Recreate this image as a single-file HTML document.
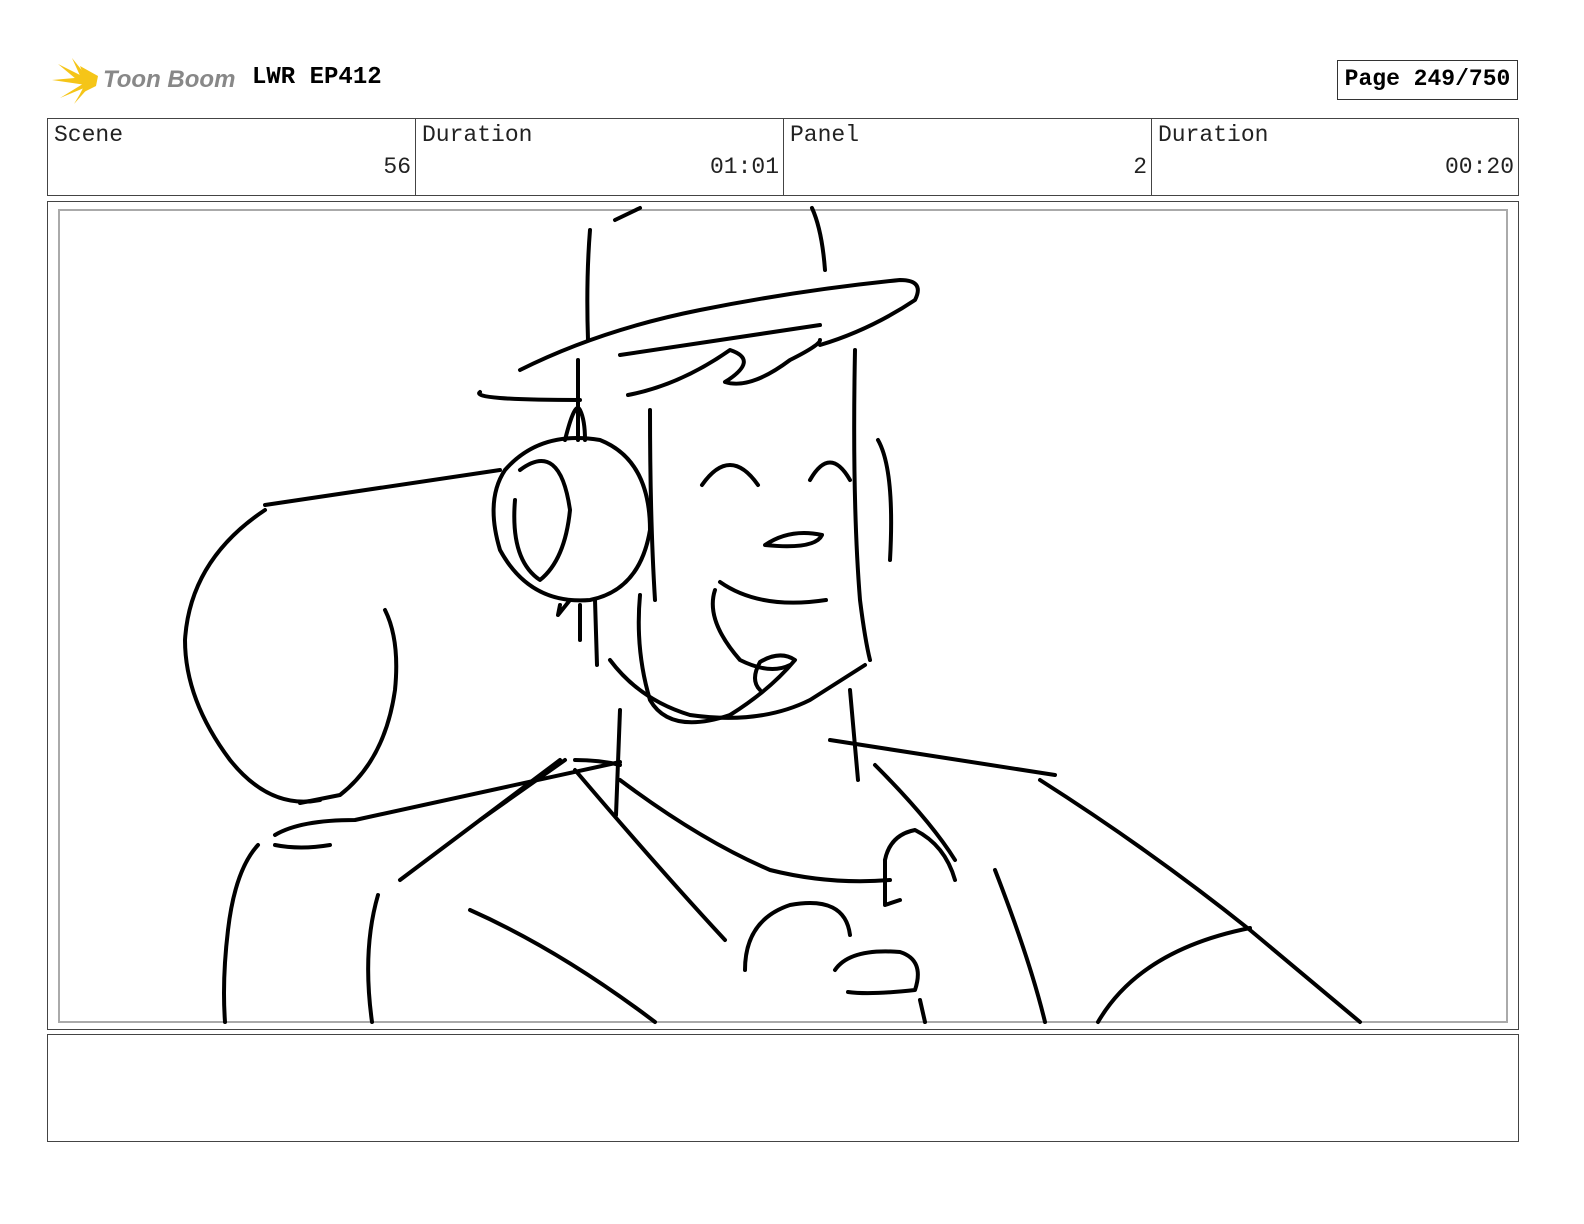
<!DOCTYPE html>
<html style="overflow:hidden"><head><style>
html,body{margin:0;padding:0}
body{width:1584px;height:1224px;background:#fff;position:relative;font-family:"Liberation Mono",monospace;overflow:hidden}
.a{position:absolute}
.cell{position:absolute;top:118px;height:78px;border:1px solid #444;box-sizing:border-box}
.lab{position:absolute;left:6px;top:3px;font-size:23px;color:#222;white-space:nowrap}
.val{position:absolute;right:4px;top:35px;font-size:23px;color:#222}
</style></head><body>
<svg class="a" style="left:50px;top:56px" width="55" height="50" viewBox="0 0 55 50">
<g fill="#f5c518"><path d="M30 10 L48 20 L46 30 L30 38 L36 26 Z"/>
<path d="M2 24 L36 21 L36 29 Z"/><path d="M8 8 L36 22 L32 28 Z"/><path d="M10 42 L36 26 L34 32 Z"/><path d="M22 2 L38 22 L32 24 Z"/><path d="M24 48 L36 28 L40 30 Z"/></g></svg>
<div class="a" style="left:103px;top:66px;font-family:'Liberation Sans',sans-serif;font-style:italic;font-weight:bold;font-size:24px;color:#888;white-space:nowrap">Toon Boom</div>
<div class="a" style="left:252px;top:64px;font-size:24px;font-weight:bold;white-space:nowrap">LWR EP412</div>
<div class="a" style="left:1337px;top:60px;width:181px;height:40px;border:1px solid #333;box-sizing:border-box;font-size:23px;font-weight:bold;text-align:center;line-height:36px;white-space:nowrap">Page 249/750</div>
<div class="cell" style="left:47px;width:369px"><span class="lab">Scene</span><span class="val">56</span></div>
<div class="cell" style="left:415px;width:369px"><span class="lab">Duration</span><span class="val">01:01</span></div>
<div class="cell" style="left:783px;width:369px"><span class="lab">Panel</span><span class="val">2</span></div>
<div class="cell" style="left:1151px;width:368px"><span class="lab">Duration</span><span class="val">00:20</span></div>
<div class="a" style="left:47px;top:201px;width:1472px;height:829px;border:1px solid #444;box-sizing:border-box"></div>
<div class="a" style="left:58px;top:209px;width:1450px;height:814px;border:2px solid #aaa;box-sizing:border-box"></div>
<div class="a" style="left:47px;top:1034px;width:1472px;height:108px;border:1px solid #444;box-sizing:border-box"></div>
<svg class="a" style="left:0;top:0" width="1584" height="1224" fill="none" stroke="#000" stroke-width="4" stroke-linecap="round" stroke-linejoin="round">
<path d="M615 220 L640 208"/><path d="M812 208 Q822 230 825 270"/>
<path d="M590 230 Q586 280 588 340"/>
<path d="M520 370 Q600 330 700 310 Q800 290 900 280 Q925 280 915 300 Q870 330 820 345"/>
<path d="M620 355 L820 325"/>
<path d="M480 392 Q470 400 580 400"/>
<path d="M628 395 Q680 385 730 350 Q760 360 725 382 Q750 390 790 360 Q820 345 820 340"/>
<path d="M650 410 Q650 520 655 600"/><path d="M855 350 Q852 500 860 600 Q865 640 870 660"/>
<path d="M878 440 Q895 470 890 560"/>
<path d="M578 360 L578 440"/>
<path d="M565 440 Q575 400 580 410 Q585 420 585 440"/>
<path d="M505 470 Q540 430 600 440 Q650 460 650 530 Q640 590 590 600 Q530 605 500 550 Q485 500 505 470Z"/>
<path d="M520 470 Q560 440 570 510 Q565 560 540 580 Q510 560 515 500"/>
<path d="M560 605 L558 615 L570 600"/>
<path d="M265 505 L500 470"/>
<path d="M265 510 Q190 560 185 640 Q185 700 230 760 Q270 810 320 800"/>
<path d="M385 610 Q400 640 395 690 Q385 760 340 795 L300 803"/>
<path d="M702 485 Q730 445 758 485"/><path d="M810 480 Q830 445 850 480"/>
<path d="M765 545 Q790 528 822 535 Q815 550 765 545Z"/>
<path d="M720 582 Q760 610 826 600"/>
<path d="M715 590 Q705 620 740 660 Q770 675 790 665"/>
<path d="M640 595 Q635 650 650 700 Q670 735 730 715"/>
<path d="M610 660 Q640 700 690 715 Q760 725 810 700 L865 665"/>
<path d="M730 715 Q770 690 795 660 Q780 650 760 662 Q750 680 760 690"/>
<path d="M580 605 L580 640"/><path d="M595 600 L597 665"/>
<path d="M620 710 L616 815"/><path d="M850 690 L858 780"/>
<path d="M830 740 L1055 775"/>
<path d="M620 780 Q700 840 770 870 Q830 885 890 880"/>
<path d="M575 760 Q600 760 620 765"/>
<path d="M480 820 L565 760"/><path d="M400 880 L560 760"/>
<path d="M275 835 Q300 820 355 820 L620 762"/>
<path d="M275 845 Q300 850 330 845"/>
<path d="M575 770 Q660 870 725 940"/>
<path d="M875 765 Q930 820 955 860"/>
<path d="M885 860 Q890 835 915 830 Q945 845 955 880"/><path d="M885 860 L885 905 L900 900"/>
<path d="M1040 780 Q1150 850 1250 930 Q1310 980 1360 1022"/>
<path d="M995 870 Q1030 960 1045 1022"/>
<path d="M1098 1022 Q1140 950 1250 928"/>
<path d="M745 970 Q745 920 790 905 Q845 895 850 935"/>
<path d="M848 992 Q870 995 915 990 Q925 960 900 952 Q850 948 835 970"/>
<path d="M920 1000 L925 1022"/>
<path d="M470 910 Q560 950 655 1022"/>
<path d="M378 895 Q362 950 372 1022"/>
<path d="M258 845 Q235 870 228 930 Q222 980 225 1022"/>
</svg>
</body></html>
